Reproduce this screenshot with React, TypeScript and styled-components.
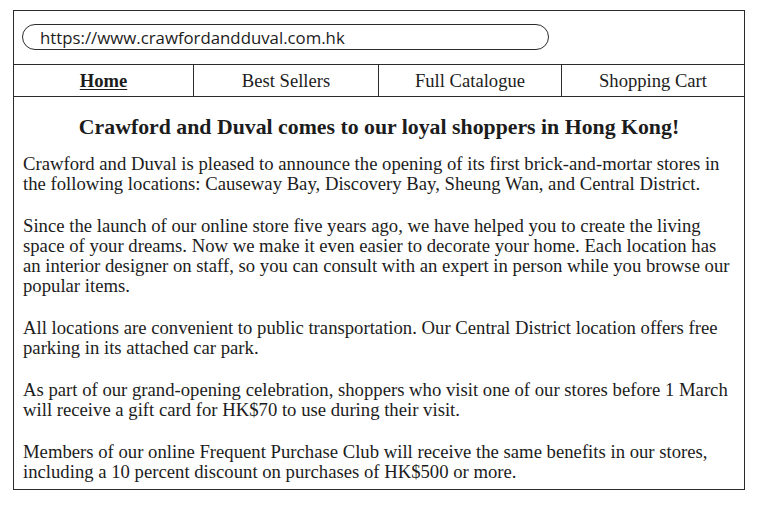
import React from "react";
import styled, { createGlobalStyle } from "styled-components";

const Global = createGlobalStyle`
  html, body { margin: 0; padding: 0; background: #ffffff; }
  body { width: 759px; height: 508px; overflow: hidden; }
`;

const Frame = styled.div`
  box-sizing: border-box;
  margin: 10px 0 0 13px;
  width: 732px;
  height: 480px;
  border: 1.5px solid #2b2b2b;
  color: #1c1c1c;
  font-family: "Liberation Serif", "Times New Roman", serif;
`;

const AddressArea = styled.div`
  height: 53px;
  box-sizing: border-box;
  padding: 13px 0 0 8px;
`;

const UrlPill = styled.div`
  box-sizing: border-box;
  width: 527px;
  height: 26px;
  border: 1.5px solid #2b2b2b;
  border-radius: 13px;
  padding-left: 17px;
  display: flex;
  align-items: center;
  font-family: "Open Sans", "Liberation Sans", sans-serif;
  font-size: 16.8px;
  color: #1c1c1c;
`;

const Nav = styled.nav`
  display: grid;
  grid-template-columns: 180px 185px 183px 1fr;
  height: 33px;
  box-sizing: border-box;
  border-top: 1.5px solid #2b2b2b;
  border-bottom: 1.5px solid #2b2b2b;
`;

const NavItem = styled.div<{ $active?: boolean; $last?: boolean }>`
  display: flex;
  align-items: center;
  justify-content: center;
  font-size: 18.6px;
  font-weight: ${(p) => (p.$active ? 700 : 400)};
  text-decoration: ${(p) => (p.$active ? "underline" : "none")};
  text-underline-offset: 2px;
  border-right: ${(p) => (p.$last ? "none" : "1.5px solid #2b2b2b")};
`;

const Heading = styled.h1`
  margin: 18px 0 0;
  text-align: center;
  font-size: 21.8px;
  font-weight: 700;
  line-height: 24px;
`;

const Body = styled.div`
  padding: 15px 0 0 9px;
`;

const Para = styled.p`
  margin: 0 0 22px;
  font-size: 18.7px;
  line-height: 20px;
  white-space: nowrap;
`;

export default function App() {
  return (
    <>
      <Global />
      <Frame>
        <AddressArea>
          <UrlPill>https://www.crawfordandduval.com.hk</UrlPill>
        </AddressArea>
        <Nav>
          <NavItem $active>Home</NavItem>
          <NavItem>Best Sellers</NavItem>
          <NavItem>Full Catalogue</NavItem>
          <NavItem $last>Shopping Cart</NavItem>
        </Nav>
        <Heading>Crawford and Duval comes to our loyal shoppers in Hong Kong!</Heading>
        <Body>
          <Para>
            Crawford and Duval is pleased to announce the opening of its first brick-and-mortar stores in
            <br />
            the following locations: Causeway Bay, Discovery Bay, Sheung Wan, and Central District.
          </Para>
          <Para>
            Since the launch of our online store five years ago, we have helped you to create the living
            <br />
            space of your dreams. Now we make it even easier to decorate your home. Each location has
            <br />
            an interior designer on staff, so you can consult with an expert in person while you browse our
            <br />
            popular items.
          </Para>
          <Para>
            All locations are convenient to public transportation. Our Central District location offers free
            <br />
            parking in its attached car park.
          </Para>
          <Para>
            As part of our grand-opening celebration, shoppers who visit one of our stores before 1 March
            <br />
            will receive a gift card for HK$70 to use during their visit.
          </Para>
          <Para>
            Members of our online Frequent Purchase Club will receive the same benefits in our stores,
            <br />
            including a 10 percent discount on purchases of HK$500 or more.
          </Para>
        </Body>
      </Frame>
    </>
  );
}
